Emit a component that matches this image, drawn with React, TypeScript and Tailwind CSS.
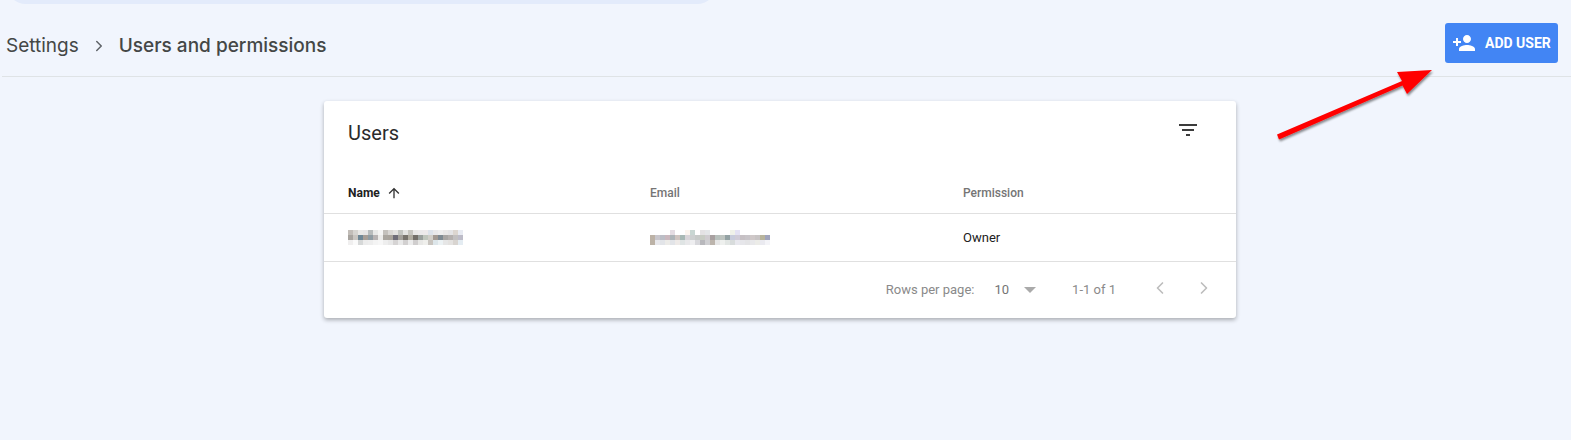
import { ChevronLeft, ChevronRight } from 'lucide-react';

// Redacted values in the table are rows of flat colour blocks
const NAME_BLUR = [
  ['#c2bdb8', '#d6d4d0', '#e9e8e6', '#e6e5e5', '#b8bcbc', '#e8e9e8', '#f5f5f4', '#c4c1bc', '#d9d7d4', '#e3e2e0', '#c2c4c0', '#e4e4e2', '#c6c5bf', '#e9e8e6', '#eceaea', '#eeeaea', '#dde3ea', '#e9e9ea', '#eeeeee', '#e9e8e8', '#e4e4e6', '#dcd6d0', '#e8ebf2'],
  ['#a8a49f', '#c9c5c0', '#6f8795', '#a79e96', '#8f9ca3', '#b8b4b4', '#ececea', '#aaa69f', '#a9a49c', '#6f6d78', '#a3a09a', '#77736c', '#b0aca0', '#736f68', '#9aa09c', '#c0c6bc', '#d2cfc8', '#a39a92', '#7e8a92', '#a8a6a4', '#b4b0ae', '#c2c0c0', '#bdbcc8'],
  ['#f0efef', '#fafafa', '#d6d8d8', '#ececec', '#eeeeee', '#f4f4f4', '#f7f7f7', '#eeeeee', '#e8e8e8', '#d6d4d4', '#e9e9e9', '#d2d0d0', '#ececec', '#d0cece', '#e8e8e6', '#efefec', '#c9c5c0', '#dde6ea', '#ecf2f4', '#e6e6e6', '#e4e2e0', '#d8d4d0', '#e4ecf2'],
];

const EMAIL_BLUR = [
  ['#ffffff', '#ffffff', '#ffffff', '#ffffff', '#e4dce2', '#ffffff', '#ffffff', '#fbf4ee', '#c8d6d2', '#ffffff', '#e4e2e4', '#e4e6e8', '#ffffff', '#ffffff', '#ffffff', '#ffffff', '#f0f2ea', '#e4e2f4', '#ffffff', '#ffffff', '#ffffff', '#ffffff', '#ffffff', '#ffffff'],
  ['#bcb2a6', '#c8c6cc', '#bcbec6', '#cab8be', '#aeb4b8', '#cfc4c0', '#a8b8b4', '#d8d4d8', '#ccd0d0', '#c6cac8', '#c8ccc4', '#d0ccd0', '#a8a0a0', '#b8c0bc', '#bec4c0', '#94a2a4', '#c8ccdc', '#d0ccd8', '#c6c0c4', '#c8c4c8', '#cfc8c8', '#c8c4c4', '#b8b49c', '#a0a4bc'],
  ['#bcb2a6', '#e8e8ec', '#e2e4e8', '#ecebe8', '#e2e4e8', '#eeeae8', '#dfe4e4', '#e8e8ea', '#eeeef0', '#d8d8dc', '#b8b8bc', '#cfcfd2', '#bcb4ac', '#e6e6e6', '#eef0ee', '#e2e6e4', '#d8dcdc', '#e8e8ee', '#e6e6ea', '#e4e4e6', '#e8e8ea', '#ecece8', '#eaeaf0', '#f4f4f8'],
];

function Blur({ rows }: { rows: string[][] }) {
  return (
    <div className="flex flex-col">
      {rows.map((row, i) => (
        <div key={i} className="flex">
          {row.map((color, j) => (
            <div key={j} className="h-[5px] w-[5px]" style={{ backgroundColor: color }} />
          ))}
        </div>
      ))}
    </div>
  );
}

function RedArrow() {
  return (
    <svg className="absolute left-[1270px] top-[62px]" width="170" height="84" viewBox="1270 62 170 84">
      <defs>
        <filter id="arrow-shadow" x="-10%" y="-10%" width="125%" height="135%">
          <feDropShadow dx="1" dy="2" stdDeviation="1.2" floodColor="#000" floodOpacity="0.45" />
        </filter>
      </defs>
      <polygon
        points="1277,134.5 1402,81 1397,72 1432,70 1407,94 1402.5,85.5 1279,139.5"
        fill="#ff0000"
        filter="url(#arrow-shadow)"
      />
    </svg>
  );
}

export default function App() {
  return (
    <div className="relative h-[440px] overflow-hidden bg-[#f1f5fd] font-['Roboto',sans-serif]">
      <div className="-mt-[36px] ml-[6px] h-[40px] w-[711px] rounded-b-[20px] bg-[#e3ebfb]" />

      {/* Page header */}
      <div className="ml-[2px] flex h-[73px] items-center justify-between border-b border-[#dfe3e6] pl-[4px] pr-[13px] pt-[6px]">
        <div className="mt-[6px] flex items-center font-['Inter',sans-serif] text-[#444746]">
          <span className="text-[19px]">Settings</span>
          <ChevronRight className="mx-[11px] h-[18px] w-[18px] text-[#5f6368]" strokeWidth={2} />
          <span className="text-[19px] font-medium">Users and permissions</span>
        </div>
        <button className="flex h-[40px] w-[113px] items-center rounded-[3px] bg-[#4285f4] pl-[7px] text-[14px] font-bold text-white">
          <svg width="24" height="24" viewBox="0 0 24 24" fill="currentColor">
            <path d="M15 12c2.21 0 4-1.79 4-4s-1.79-4-4-4-4 1.79-4 4 1.79 4 4 4zm-9-2V7H4v3H1v2h3v3h2v-3h3v-2H6zm9 4c-2.67 0-8 1.34-8 4v2h16v-2c0-2.66-5.33-4-8-4z" />
          </svg>
          <span className="ml-[9px] whitespace-nowrap">ADD USER</span>
        </button>
      </div>

      <div className="flex justify-center pr-[11px] pt-[24px]">
        <div className="w-[912px] rounded-[3px] bg-white shadow-[0_2px_4px_rgba(0,0,0,0.3)]">
          {/* Card title */}
          <div className="flex h-[68px] items-start justify-between pl-[24px] pr-[36px]">
            <h1 className="mt-[17px] text-[20px] text-[#2b2b2b]">Users</h1>
            <svg className="mt-[17px]" width="24" height="24" viewBox="0 0 24 24" fill="#3c3c3c">
              <path d="M10 18h4v-2h-4v2zM3 6v2h18V6H3zm3 7h12v-2H6v2z" />
            </svg>
          </div>

          {/* Table */}
          <div className="grid h-[45px] grid-cols-[302px_313px_1fr] items-center border-b border-[#e0e0e0] pl-[24px] pt-[4px] text-[12px] font-medium text-[#757575]">
            <div className="flex items-center font-bold text-[#212121]">
              Name
              <svg className="ml-[6px]" width="16" height="16" viewBox="0 0 24 24" fill="#333">
                <path d="M4 12l1.41 1.41L11 7.83V20h2V7.83l5.58 5.59L20 12l-8-8-8 8z" />
              </svg>
            </div>
            <div>Email</div>
            <div>Permission</div>
          </div>
          <div className="grid h-[48px] grid-cols-[302px_313px_1fr] items-center border-b border-[#e0e0e0] pl-[24px] text-[13px] text-[#212121]">
            <Blur rows={NAME_BLUR} />
            <Blur rows={EMAIL_BLUR} />
            <div>Owner</div>
          </div>

          {/* Pagination */}
          <div className="flex h-[56px] items-center justify-end pr-[22px] text-[13px] text-[#8a8a8a]">
            <span>Rows per page:</span>
            <span className="ml-[20px] text-[#757575]">10</span>
            <span className="ml-[15px] h-0 w-0 border-x-[6px] border-t-[6px] border-x-transparent border-t-[#aaaaaa]" />
            <span className="ml-[36px]">1-1 of 1</span>
            <ChevronLeft className="-mt-[4px] ml-[34px] h-[20px] w-[20px] text-[#bdbdbd]" strokeWidth={2} />
            <ChevronRight className="-mt-[4px] ml-[24px] h-[20px] w-[20px] text-[#bdbdbd]" strokeWidth={2} />
          </div>
        </div>
      </div>

      <RedArrow />
    </div>
  );
}
